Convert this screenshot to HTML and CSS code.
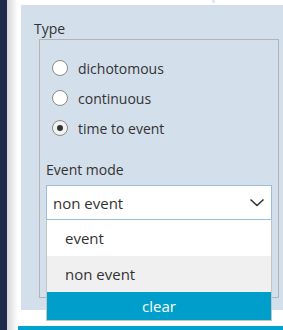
FILE: index.html
```html
<!doctype html>
<html lang="en">

<head>
    <meta charset="UTF-8">
    <title>Type</title>
    <link rel="stylesheet" href="styles.css">
</head>

<body>
    <div class="sidebar"></div>
    <div class="edge"></div>
    <div class="main">
        <div class="tabs">
            <div class="tab tab-left"></div>
            <div class="tab tab-right"></div>
        </div>

        <div class="panel">
            <div class="label">Type</div>
            <div class="fieldset">
                <div class="option">
                    <span class="radio"></span>
                    <span>dichotomous</span>
                </div>
                <div class="option">
                    <span class="radio"></span>
                    <span>continuous</span>
                </div>
                <div class="option">
                    <span class="radio checked"></span>
                    <span>time to event</span>
                </div>

                <div class="field-label">Event mode</div>
                <div class="select-wrap">
                    <div class="select">
                        <span>non event</span>
                        <svg width="16" height="9" viewBox="0 0 16 9">
                            <path d="M1.5 1.5 L8 7.5 L14.5 1.5" fill="none" stroke="#333" stroke-width="1.6" />
                        </svg>
                    </div>
                    <div class="menu">
                        <div class="menu-item">event</div>
                        <div class="menu-item active">non event</div>
                        <div class="menu-clear">clear</div>
                    </div>
                </div>
            </div>
        </div>

        <div class="footer"></div>
    </div>
</body>
</html>
```

FILE: styles.css
```css
body {
    margin: 0;
    height: 330px;
    display: flex;
    overflow: hidden;
    font-family: "Open Sans", "Noto Sans", sans-serif;
    font-size: 14px;
    color: #333;
    background-color: #fff;
}

.sidebar {
    width: 7px;
    background-color: #1f2a4b;
}

.edge {
    width: 11px;
    background: linear-gradient(to right, #d6d6d6, #fff);
}

.main {
    flex: 1;
    display: flex;
    flex-direction: column;
    min-width: 0;
}

.tabs {
    display: flex;
    gap: 3px;
    height: 3px;
    margin-left: 3px;
    background-color: #e4eaf1;
}

.tab {
    background-color: #fff;
}

.tab-left {
    width: 191px;
}

.tab-right {
    flex: 1;
}

.panel {
    margin-top: 2px;
    margin-left: 3px;
    height: 305px;
    box-sizing: border-box;
    padding: 14px 0 0 13px;
    background-color: #d3dfeb;
}

.label {
    line-height: 20px;
}

.fieldset {
    margin: 0 0 0 5px;
    width: 240px;
    height: 259px;
    box-sizing: border-box;
    border: 1px solid #b4b4b4;
    padding: 13px 6px 0 6px;
}

.option {
    display: flex;
    align-items: center;
    gap: 10px;
    height: 30px;
    padding-left: 6px;
}

.radio {
    width: 14px;
    height: 14px;
    border: 1px solid #8a8a8a;
    border-radius: 50%;
    background-color: #fff;
    display: flex;
    align-items: center;
    justify-content: center;
}

.radio.checked {
    background-color: #f2f2f2;
}

.radio.checked::after {
    content: "";
    width: 6px;
    height: 6px;
    border-radius: 50%;
    background-color: #333;
}

.field-label {
    margin-top: 17px;
    line-height: 20px;
}

.select-wrap {
    position: relative;
    margin-top: 5px;
    width: 226px;
    font-size: 15px;
}

.select {
    height: 35px;
    box-sizing: border-box;
    border: 1px solid #9dbddc;
    background-color: #fff;
    display: flex;
    align-items: center;
    justify-content: space-between;
    padding: 0 6px 0 6px;
}

.menu {
    position: absolute;
    top: 35px;
    left: 0;
    right: 0;
    background-color: #fff;
    border: 1px solid #c4c4c4;
    border-top: none;
}

.menu-item {
    height: 36px;
    line-height: 36px;
    padding-left: 18px;
}

.menu-item.active {
    background-color: #f0f0f0;
}

.menu-clear {
    height: 28px;
    line-height: 28px;
    text-align: center;
    color: #fff;
    background-color: #009fcb;
}

.footer {
    margin-top: 16px;
    height: 4px;
    background-color: #00a3cf;
}
```
